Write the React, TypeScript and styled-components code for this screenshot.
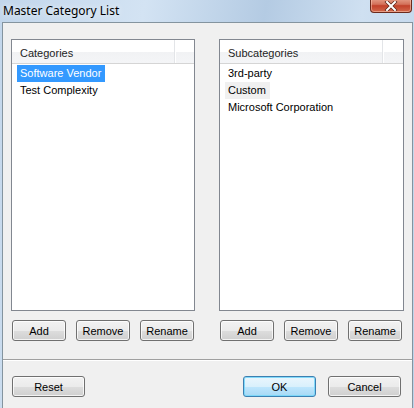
import styled, { createGlobalStyle } from "styled-components";

const GlobalStyle = createGlobalStyle`
  html, body {
    margin: 0;
    padding: 0;
    background: #ffffff;
  }
`;

const CATEGORIES = [
  { name: "Software Vendor", state: "selected" },
  { name: "Test Complexity", state: "" },
];

const SUBCATEGORIES = [
  { name: "3rd-party", state: "" },
  { name: "Custom", state: "hover" },
  { name: "Microsoft Corporation", state: "" },
];

export default function App() {
  return (
    <>
      <GlobalStyle />
      <Window>
        <TitleBar>
          <Title>Master Category List</Title>
          <CloseButton>
            <svg width="14" height="10" viewBox="0 0 14 10">
              <path d="M3 1 L11 9 M11 1 L3 9" stroke="#5a2418" strokeWidth="3.4" strokeLinecap="square" />
              <path d="M3 1 L11 9 M11 1 L3 9" stroke="#ffffff" strokeWidth="2" strokeLinecap="square" />
            </svg>
          </CloseButton>
        </TitleBar>
        <Client>
          <Panels>
            <Panel $width={184}>
              <ListBox>
                <ListHeader>
                  <HeaderCell>Categories</HeaderCell>
                  <HeaderRest />
                </ListHeader>
                <Items>
                  {CATEGORIES.map((c) => (
                    <Item key={c.name} $state={c.state}>
                      {c.name}
                    </Item>
                  ))}
                </Items>
              </ListBox>
              <ButtonRow $right={1}>
                <Button>Add</Button>
                <Button>Remove</Button>
                <Button>Rename</Button>
              </ButtonRow>
            </Panel>
            <Panel $width={185}>
              <ListBox>
                <ListHeader>
                  <HeaderCell>Subcategories</HeaderCell>
                  <HeaderRest />
                </ListHeader>
                <Items>
                  {SUBCATEGORIES.map((c) => (
                    <Item key={c.name} $state={c.state}>
                      {c.name}
                    </Item>
                  ))}
                </Items>
              </ListBox>
              <ButtonRow $right={2}>
                <Button>Add</Button>
                <Button>Remove</Button>
                <Button>Rename</Button>
              </ButtonRow>
            </Panel>
          </Panels>
          <Separator />
          <Footer>
            <Button $wide>Reset</Button>
            <FooterRight>
              <Button $wide $default>
                OK
              </Button>
              <Button $wide>Cancel</Button>
            </FooterRight>
          </Footer>
        </Client>
      </Window>
    </>
  );
}

const Window = styled.div`
  width: 414px;
  height: 408px;
  box-sizing: border-box;
  display: flex;
  flex-direction: column;
  padding: 0 1px 0 2px;
  background: linear-gradient(100deg, #c2d6eb 0%, #d3e3f3 30%, #b4cbe3 55%, #cfe0f1 75%, #bcd2e9 100%);
  overflow: hidden;
`;

const TitleBar = styled.div`
  height: 22px;
  display: flex;
  align-items: flex-start;
  justify-content: space-between;
  position: relative;
`;

const Title = styled.div`
  font-family: "Noto Sans", "Open Sans", sans-serif;
  font-size: 12px;
  color: #000;
  margin: 2px 0 0 1px;
  text-shadow: 0 0 6px rgba(255, 255, 255, 0.9);
`;

const CloseButton = styled.div`
  width: 42px;
  height: 15px;
  margin: -2px 1px 0 0;
  box-sizing: border-box;
  border: 1px solid #6b2a1c;
  border-top: none;
  border-radius: 0 0 4px 4px;
  background: linear-gradient(180deg, #e8a48e 0%, #d3715a 45%, #c2412a 55%, #d2694c 100%);
  box-shadow: inset 0 0 0 1px rgba(255, 210, 190, 0.5);
  display: flex;
  align-items: center;
  justify-content: center;
  padding-top: 1px;
`;

const Client = styled.div`
  flex: 1;
  display: flex;
  flex-direction: column;
  background: #f0f0f0;
  border: 1px solid #84949f;
  border-bottom: none;
  font-family: "Liberation Sans", Arial, sans-serif;
  font-size: 11px;
  color: #000;
`;

const Panels = styled.div`
  display: flex;
  justify-content: space-between;
  padding: 16px 8px 0 8px;
`;

const Panel = styled.div<{ $width: number }>`
  width: ${({ $width }) => $width}px;
  display: flex;
  flex-direction: column;
`;

const ListBox = styled.div`
  height: 272px;
  box-sizing: border-box;
  border: 1px solid #828790;
  background: #ffffff;
  display: flex;
  flex-direction: column;
`;

const ListHeader = styled.div`
  height: 24px;
  display: flex;
  box-sizing: border-box;
  border-bottom: 1px solid #d5d5d5;
  background: linear-gradient(180deg, #ffffff 0%, #ffffff 50%, #f1f2f4 51%, #f4f5f7 100%);
`;

const HeaderCell = styled.div`
  width: 163px;
  box-sizing: border-box;
  padding: 7px 0 0 8px;
  border-right: 1px solid #e3e5e8;
  color: #1e1e1e;
`;

const HeaderRest = styled.div`
  flex: 1;
  border-left: 1px solid #ffffff;
`;

const Items = styled.div`
  display: flex;
  flex-direction: column;
  align-items: flex-start;
  padding: 1px 0 0 5px;
`;

const Item = styled.div<{ $state: string }>`
  height: 17px;
  line-height: 17px;
  padding: 0 4px 0 3px;
  background: ${({ $state }) =>
    $state === "selected" ? "#3399ff" : $state === "hover" ? "#f0f0f0" : "transparent"};
  color: ${({ $state }) => ($state === "selected" ? "#ffffff" : "#000000")};
`;

const ButtonRow = styled.div<{ $right: number }>`
  display: flex;
  gap: 10px;
  padding: 9px ${({ $right }) => $right}px 0 1px;
`;

const Button = styled.div<{ $wide?: boolean; $default?: boolean }>`
  width: ${({ $wide }) => ($wide ? 73 : 54)}px;
  height: 21px;
  box-sizing: border-box;
  display: flex;
  align-items: center;
  justify-content: center;
  border: 1px solid ${({ $default }) => ($default ? "#3c7fb1" : "#707070")};
  border-radius: 3px;
  background: ${({ $default }) =>
    $default
      ? "linear-gradient(180deg, #eaf6fd 0%, #d9f0fc 50%, #bee6fd 51%, #a7d9f5 100%)"
      : "linear-gradient(180deg, #f2f2f2 0%, #ebebeb 50%, #dddddd 51%, #cfcfcf 100%)"};
  box-shadow: inset 0 0 0 1px
    ${({ $default }) => ($default ? "rgba(120, 215, 250, 0.9)" : "rgba(255, 255, 255, 0.75)")};
  color: #000;
`;

const Separator = styled.div`
  margin-top: 18px;
  height: 1px;
  background: #a0a0a0;
  border-bottom: 1px solid #ffffff;
`;

const Footer = styled.div`
  display: flex;
  justify-content: space-between;
  padding: 15px 11px 0 9px;
`;

const FooterRight = styled.div`
  display: flex;
  gap: 12px;
`;
